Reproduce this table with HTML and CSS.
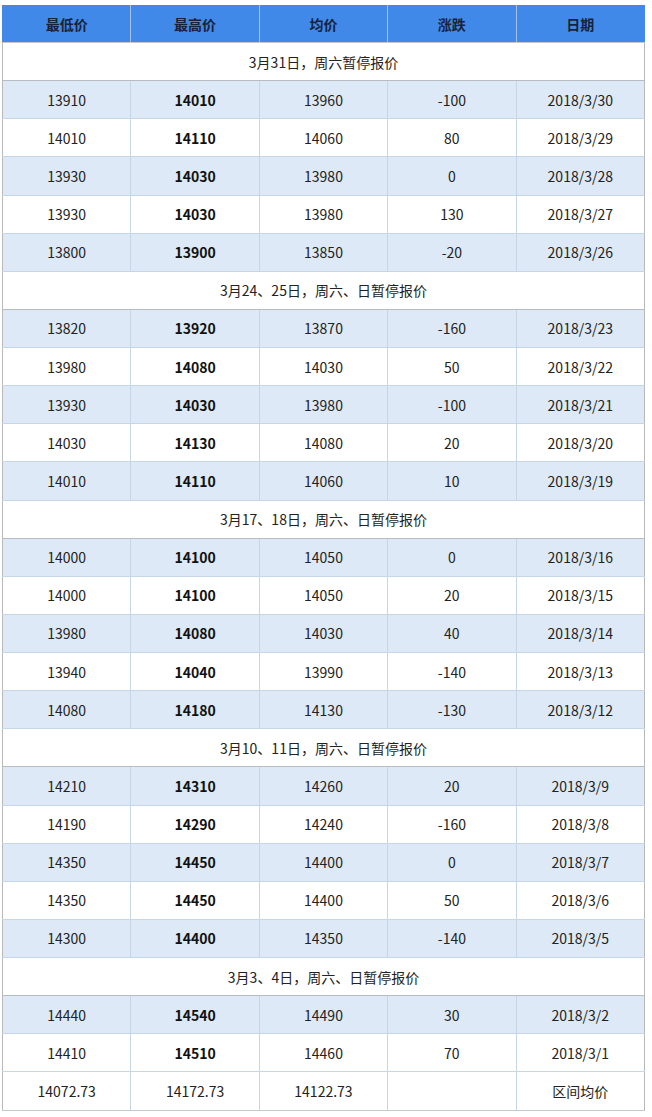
FILE: index.html
```html
<!DOCTYPE html>
<html lang="zh">
<head>
<meta charset="utf-8">
<title>价格表</title>
<link rel="stylesheet" href="styles.css">
</head>
<body>
<div class="wrap">
<table class="price">
<thead>
<tr><th>最低价</th><th>最高价</th><th>均价</th><th>涨跌</th><th>日期</th></tr>
</thead>
<tbody>
<tr class="sec"><td colspan="5">3月31日，周六暂停报价</td></tr>
<tr class="alt"><td>13910</td><td class="b">14010</td><td>13960</td><td>-100</td><td>2018/3/30</td></tr>
<tr><td>14010</td><td class="b">14110</td><td>14060</td><td>80</td><td>2018/3/29</td></tr>
<tr class="alt"><td>13930</td><td class="b">14030</td><td>13980</td><td>0</td><td>2018/3/28</td></tr>
<tr><td>13930</td><td class="b">14030</td><td>13980</td><td>130</td><td>2018/3/27</td></tr>
<tr class="alt"><td>13800</td><td class="b">13900</td><td>13850</td><td>-20</td><td>2018/3/26</td></tr>
<tr class="sec"><td colspan="5">3月24、25日，周六、日暂停报价</td></tr>
<tr class="alt"><td>13820</td><td class="b">13920</td><td>13870</td><td>-160</td><td>2018/3/23</td></tr>
<tr><td>13980</td><td class="b">14080</td><td>14030</td><td>50</td><td>2018/3/22</td></tr>
<tr class="alt"><td>13930</td><td class="b">14030</td><td>13980</td><td>-100</td><td>2018/3/21</td></tr>
<tr><td>14030</td><td class="b">14130</td><td>14080</td><td>20</td><td>2018/3/20</td></tr>
<tr class="alt"><td>14010</td><td class="b">14110</td><td>14060</td><td>10</td><td>2018/3/19</td></tr>
<tr class="sec"><td colspan="5">3月17、18日，周六、日暂停报价</td></tr>
<tr class="alt"><td>14000</td><td class="b">14100</td><td>14050</td><td>0</td><td>2018/3/16</td></tr>
<tr><td>14000</td><td class="b">14100</td><td>14050</td><td>20</td><td>2018/3/15</td></tr>
<tr class="alt"><td>13980</td><td class="b">14080</td><td>14030</td><td>40</td><td>2018/3/14</td></tr>
<tr><td>13940</td><td class="b">14040</td><td>13990</td><td>-140</td><td>2018/3/13</td></tr>
<tr class="alt"><td>14080</td><td class="b">14180</td><td>14130</td><td>-130</td><td>2018/3/12</td></tr>
<tr class="sec"><td colspan="5">3月10、11日，周六、日暂停报价</td></tr>
<tr class="alt"><td>14210</td><td class="b">14310</td><td>14260</td><td>20</td><td>2018/3/9</td></tr>
<tr><td>14190</td><td class="b">14290</td><td>14240</td><td>-160</td><td>2018/3/8</td></tr>
<tr class="alt"><td>14350</td><td class="b">14450</td><td>14400</td><td>0</td><td>2018/3/7</td></tr>
<tr><td>14350</td><td class="b">14450</td><td>14400</td><td>50</td><td>2018/3/6</td></tr>
<tr class="alt"><td>14300</td><td class="b">14400</td><td>14350</td><td>-140</td><td>2018/3/5</td></tr>
<tr class="sec"><td colspan="5">3月3、4日，周六、日暂停报价</td></tr>
<tr class="alt"><td>14440</td><td class="b">14540</td><td>14490</td><td>30</td><td>2018/3/2</td></tr>
<tr><td>14410</td><td class="b">14510</td><td>14460</td><td>70</td><td>2018/3/1</td></tr>
<tr><td>14072.73</td><td>14172.73</td><td>14122.73</td><td></td><td>区间均价</td></tr>
</tbody>
</table>
</div>
</body>
</html>
```

FILE: styles.css
```css
html, body {
  margin: 0;
  padding: 0;
  background: #ffffff;
}
.wrap {
  padding: 5px 0 0 2px;
}
.price {
  width: 643px;
  border-collapse: collapse;
  table-layout: fixed;
  font-family: "Noto Sans CJK SC", "Noto Sans", sans-serif;
  font-size: 14px;
  color: #222;
}
.price th {
  background: #4189e8;
  color: #17233a;
  font-weight: 700;
  height: 36px;
  padding: 0;
  border: 1px solid #9cc3f2;
  border-top-color: #4189e8;
  border-bottom: 1px solid #c7c7c7;
  text-align: center;
  vertical-align: middle;
}
.price th:first-child { border-left-color: #4189e8; }
.price th:last-child { border-right-color: #4189e8; }
.price td {
  height: 37.14px;
  padding: 0;
  text-align: center;
  vertical-align: middle;
  border: 1px solid #c6d6e6;
}
.price tr > td:first-child { border-left-color: #b8b8b8; }
.price tr > td:last-child { border-right-color: #b8b8b8; }
.price tbody tr:last-child td { border-bottom-color: #c0cbd6; }
.price tr.sec td {
  border-top-color: #b6bcc2;
  border-bottom-color: #b6bcc2;
}
.price tr.alt td {
  background: #dde9f6;
}
.price td.b {
  font-weight: 700;
  color: #111;
}
```
